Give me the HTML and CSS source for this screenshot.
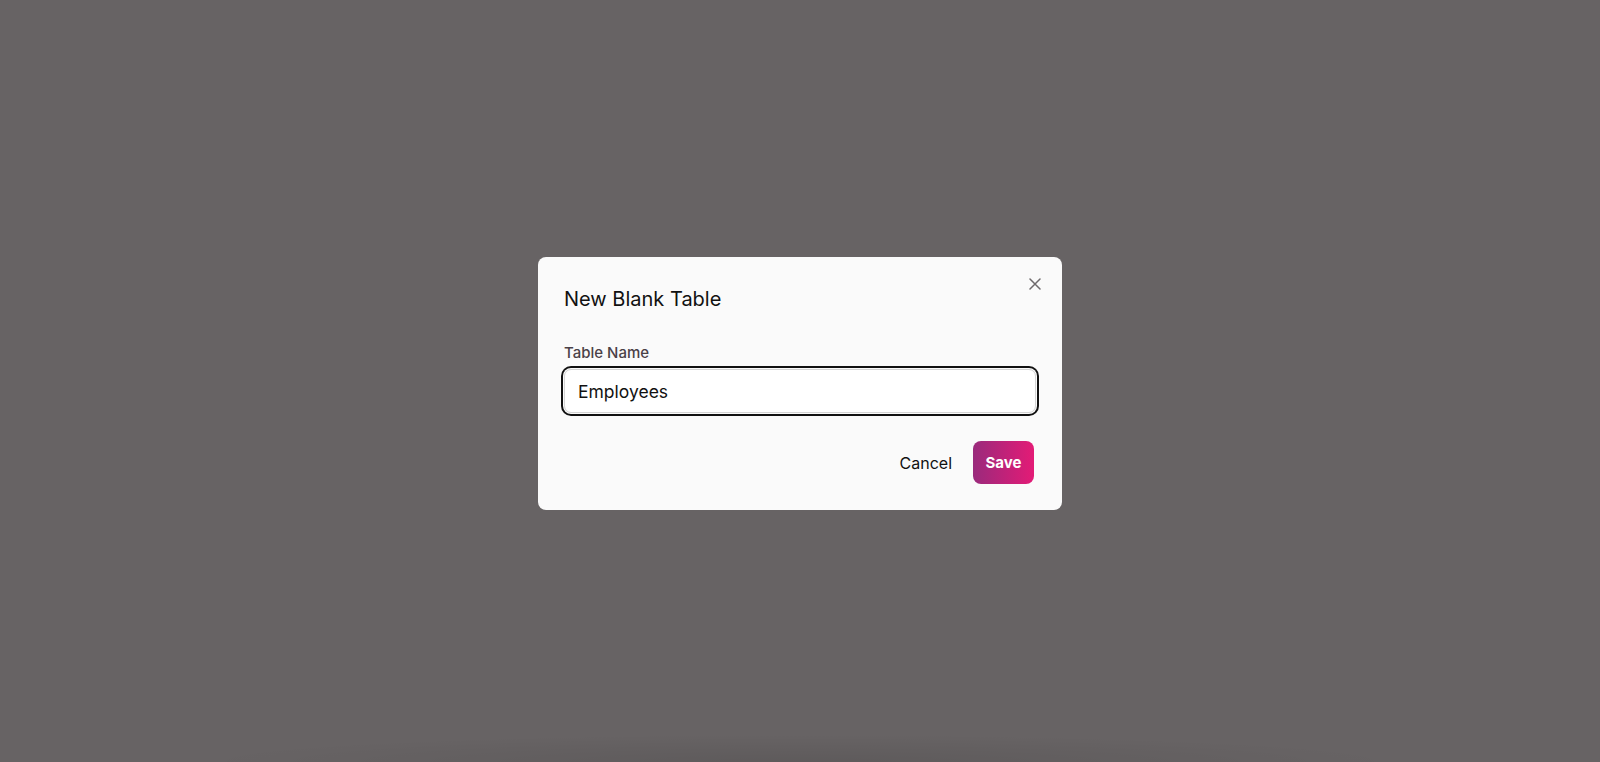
FILE: index.html
```html
<!DOCTYPE html>
<html lang="en">
<head>
    <meta charset="UTF-8">
    <meta name="viewport" content="width=device-width, initial-scale=1.0">
    <title>New Blank Table</title>
    <link rel="stylesheet" href="styles.css">
</head>
<body>
    <!-- Modal backdrop -->
    <div class="backdrop">
        <div class="dialog">
            <button class="close-btn" aria-label="Close">
                <svg width="12" height="12" viewBox="0 0 12 12">
                    <path d="M1 1 L11 11 M11 1 L1 11" stroke="#6e6a6c" stroke-width="1.5" stroke-linecap="round"/>
                </svg>
            </button>

            <h2 class="dialog-title">New Blank Table</h2>

            <label class="field-label" for="table-name">Table Name</label>
            <input class="field-input" id="table-name" type="text" value="Employees">

            <div class="actions">
                <button class="btn-cancel">Cancel</button>
                <button class="btn-save">Save</button>
            </div>
        </div>
    </div>
</body>
</html>
```

FILE: styles.css
```css
body {
    margin: 0;
    font-family: Inter, 'Noto Sans', sans-serif;
    background: radial-gradient(ellipse 38% 28px at 50% 100%, rgba(0, 0, 0, 0.09), transparent), #676364;
    min-height: 100vh;
}

.backdrop {
    height: 100vh;
    display: flex;
    justify-content: center;
    align-items: flex-start;
    padding-top: 257px;
    box-sizing: border-box;
}

.dialog {
    position: relative;
    width: 524px;
    box-sizing: border-box;
    background-color: #fafafa;
    border-radius: 8px;
    padding: 28px 26px 26px 26px;
    display: flex;
    flex-direction: column;
}

.close-btn {
    position: absolute;
    top: 19px;
    right: 19px;
    width: 16px;
    height: 16px;
    padding: 0;
    border: none;
    background: none;
    display: flex;
    align-items: center;
    justify-content: center;
    cursor: pointer;
}

.dialog-title {
    margin: 0;
    font-size: 20px;
    line-height: 28px;
    font-weight: 400;
    color: #111111;
}

.field-label {
    margin-top: 30px;
    font-size: 15px;
    line-height: 20px;
    font-weight: 500;
    color: #4a4147;
}

.field-input {
    margin-top: 6px;
    height: 44px;
    box-sizing: border-box;
    border: 1px solid #d4d4d4;
    border-radius: 7px;
    background-color: #ffffff;
    padding: 0 13px;
    font-family: inherit;
    font-size: 17.5px;
    color: #111111;
    outline: none;
    box-shadow: 0 0 0 1px #fafafa, 0 0 0 3px #111111;
}

.actions {
    margin-top: 28px;
    display: flex;
    justify-content: flex-end;
    align-items: center;
    gap: 9px;
    padding-right: 2px;
}

.btn-cancel {
    border: none;
    background: none;
    font-family: inherit;
    font-size: 16px;
    font-weight: 400;
    color: #111111;
    padding: 0 12px;
    height: 43px;
    cursor: pointer;
}

.btn-save {
    border: none;
    border-radius: 8px;
    background: linear-gradient(90deg, #9a2a7c, #e31b76);
    color: #ffffff;
    font-family: inherit;
    font-size: 15px;
    font-weight: 700;
    width: 61px;
    height: 43px;
    cursor: pointer;
}
```
